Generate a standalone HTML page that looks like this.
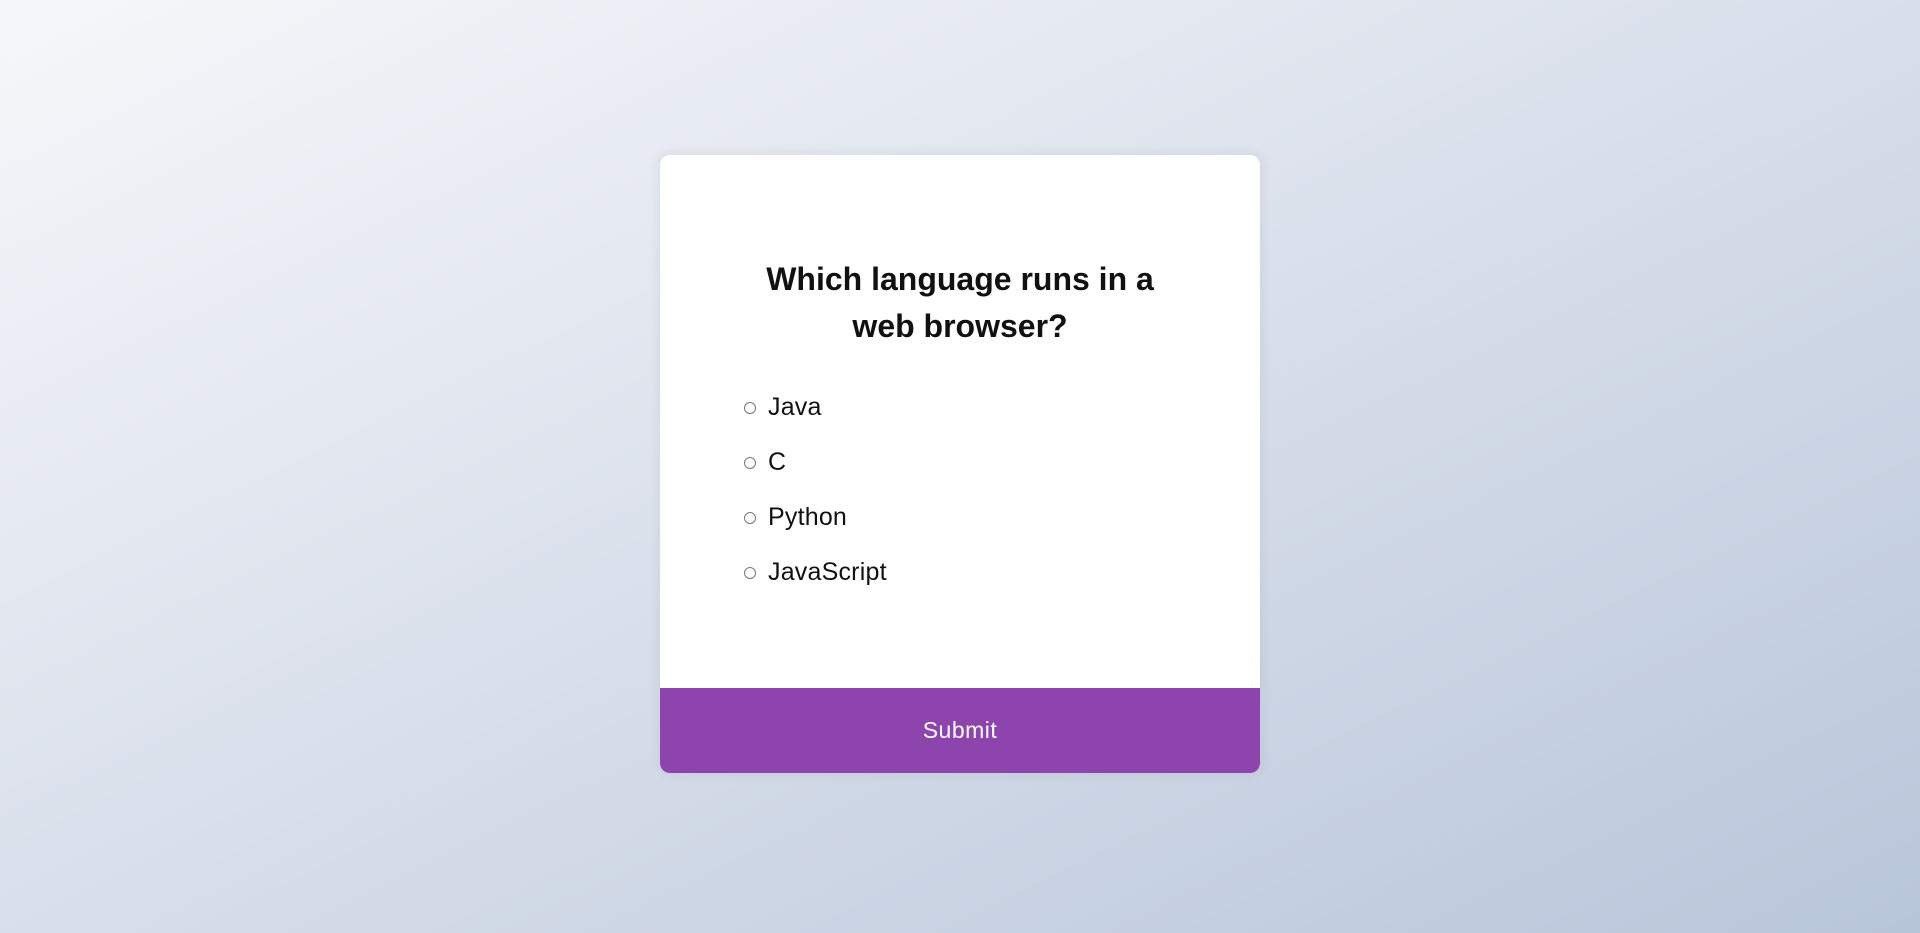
<!DOCTYPE html>
<html>
<head>
<meta charset="utf-8">
<style>
  html,body{margin:0;padding:0;}
  body{
    width:1920px;height:933px;overflow:hidden;
    background:linear-gradient(to bottom right,#f6f7fa 0%,#dfe4ee 40%,#b8c6da 100%);
    font-family:"Liberation Sans",sans-serif;
    position:relative;
  }
  .card{
    position:absolute;left:660px;top:155px;width:600px;height:618px;
    background:#fff;border-radius:10px;
    box-shadow:0 0 10px 2px rgba(100,100,100,0.1);
    overflow:hidden;
  }
  h2{
    position:absolute;left:0;right:0;top:101px;margin:0;
    text-align:center;font-size:32px;font-weight:bold;line-height:47px;color:#111;
    letter-spacing:0;
  }
  .opt{
    position:absolute;left:84px;font-size:25px;color:#111;letter-spacing:0.2px;
    display:flex;align-items:center;
  }
  .opt span.r{
    width:12px;height:12px;border:1px solid #777;border-radius:50%;
    margin-right:12px;box-sizing:border-box;display:inline-block;
  }
  .btn{
    position:absolute;left:0;right:0;bottom:0;height:85px;
    background:#8e44ad;color:#fff;font-size:23px;letter-spacing:0.5px;
    display:flex;align-items:center;justify-content:center;
  }
</style>
</head>
<body>
<div class="card">
  <h2>Which language runs in a<br>web browser?</h2>
  <div class="opt" style="top:238px"><span class="r"></span>Java</div>
  <div class="opt" style="top:293px"><span class="r"></span>C</div>
  <div class="opt" style="top:348px"><span class="r"></span>Python</div>
  <div class="opt" style="top:403px"><span class="r"></span>JavaScript</div>
  <div class="btn">Submit</div>
</div>
</body>
</html>
